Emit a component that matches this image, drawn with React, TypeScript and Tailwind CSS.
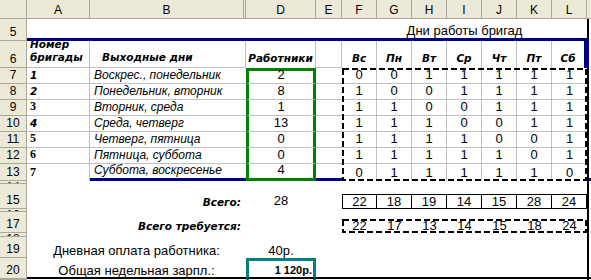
import React from "react";

const sans = "font-['Liberation_Sans',Arial,sans-serif]";
const heavy = "font-['DejaVu_Sans',sans-serif] font-bold italic text-[10.5px] leading-[13px]";
const serifNum = "font-['Liberation_Serif',serif] font-bold text-[12px] leading-none";
const hdr = "bg-[#ece9d8] border-[#aca899]";

function ColHead({ w, label }: { w: string; label: string }) {
  return (
    <div
      className={`${w} h-full shrink-0 border-r border-b ${hdr} flex items-center justify-center text-[12px] leading-none pt-px`}
    >
      {label}
    </div>
  );
}

function RowHead({ h, label, tiny }: { h: string; label: string; tiny?: boolean }) {
  return (
    <div
      className={`${h} w-[27px] shrink-0 border-r border-b ${hdr} flex justify-center overflow-hidden text-[12px] leading-none ${
        tiny ? "items-start" : "items-end pb-[2px]"
      }`}
    >
      {label}
    </div>
  );
}

function Dashed({ w, h }: { w: number; h: number }) {
  return (
    <svg className="absolute inset-0 pointer-events-none" width={w} height={h}>
      <rect
        x={1}
        y={1}
        width={w - 2}
        height={h - 2}
        fill="none"
        stroke="#000"
        strokeWidth={2}
        strokeDasharray="6 3"
      />
    </svg>
  );
}

const brigades: { n: string; serif: boolean; days: string; workers: number; week: number[] }[] = [
  { n: "1", serif: false, days: "Воскрес., понедельник", workers: 2, week: [0, 0, 1, 1, 1, 1, 1] },
  { n: "2", serif: false, days: "Понедельник, вторник", workers: 8, week: [1, 0, 0, 1, 1, 1, 1] },
  { n: "3", serif: true, days: "Вторник, среда", workers: 1, week: [1, 1, 0, 0, 1, 1, 1] },
  { n: "4", serif: false, days: "Среда, четверг", workers: 13, week: [1, 1, 1, 0, 0, 1, 1] },
  { n: "5", serif: true, days: "Четверг, пятница", workers: 0, week: [1, 1, 1, 1, 0, 0, 1] },
  { n: "6", serif: true, days: "Пятница, суббота", workers: 0, week: [1, 1, 1, 1, 1, 0, 1] },
  { n: "7", serif: true, days: "Суббота, воскресенье", workers: 4, week: [0, 1, 1, 1, 1, 1, 0] },
];

const dayNames = ["Вс", "Пн", "Вт", "Ср", "Чт", "Пт", "Сб"];
const totals = [22, 18, 19, 14, 15, 28, 24];
const required = [22, 17, 13, 14, 15, 18, 24];
const letters = ["F", "G", "H", "I", "J", "K", "L"];

export default function App() {
  return (
    <div className={`w-[591px] h-[280px] overflow-hidden bg-white text-black ${sans} flex flex-col`}>
      {/* column letters */}
      <div className="flex h-[19px] shrink-0">
        <div className={`w-[27px] h-full shrink-0 border-r border-b ${hdr}`} />
        <ColHead w="w-[63px]" label="A" />
        <ColHead w="w-[154px]" label="B" />
        <div className={`w-[2px] h-full shrink-0 border-r border-b ${hdr}`} />
        <ColHead w="w-[70px]" label="D" />
        <ColHead w="w-[26px]" label="E" />
        {letters.map((l) => (
          <ColHead key={l} w="w-[35px]" label={l} />
        ))}
        <div className={`w-[4px] h-full shrink-0 border-b ${hdr}`} />
      </div>

      {/* row 5: title */}
      <div className="flex h-[22px] shrink-0">
        <RowHead h="h-[22px]" label="5" />
        <div className="w-[315px] shrink-0 border-b-[3px] border-[#000080]" />
        <div className="w-[245px] shrink-0 border-b-[3px] border-[#000080] flex items-end justify-center text-[13px] leading-none pb-[1px]">
          Дни работы бригад
        </div>
        <div className="w-[4px] shrink-0 border-l-2 border-black" />
      </div>

      {/* row 6: headings */}
      <div className="flex h-[27px] shrink-0">
        <RowHead h="h-[27px]" label="6" />
        <div className={`w-[63px] shrink-0 border-r border-b border-[#c0c0c0] flex flex-col justify-end overflow-hidden pl-[3px] pb-[3px] ${heavy}`}>
          <span>Номер</span>
          <span>бригады</span>
        </div>
        <div className={`w-[156px] shrink-0 border-r border-b border-[#c0c0c0] flex items-end pl-[12px] pb-[3px] ${heavy}`}>
          Выходные дни
        </div>
        <div className={`w-[70px] shrink-0 border-r border-[#c0c0c0] flex items-end justify-center pb-[3px] whitespace-nowrap ${heavy}`}>
          Работники
        </div>
        <div className="w-[26px] shrink-0 border-r border-b border-[#c0c0c0]" />
        {dayNames.map((d, i) => (
          <div
            key={d}
            className={`w-[35px] shrink-0 flex items-end justify-center pb-[3px] ${heavy} ${
              i === 6 ? "border-r-[3px] border-[#000080]" : "border-r border-[#c0c0c0]"
            }`}
          >
            {d}
          </div>
        ))}
        <div className="w-[4px] shrink-0 border-l-2 border-[#000080]" />
      </div>

      {/* rows 7-13: brigades */}
      <div className="flex h-[113px] shrink-0">
        <div className="flex flex-col">
          {brigades.map((b, i) => (
            <RowHead key={b.n} h={i === 6 ? "h-[17px]" : "h-[16px]"} label={String(7 + i)} />
          ))}
        </div>
        {/* A */}
        <div className="flex flex-col w-[63px] shrink-0">
          {brigades.map((b, i) => (
            <div
              key={b.n}
              className={`${i === 6 ? "h-[17px] border-r" : "h-[16px] border-r border-b"} border-[#c0c0c0] flex items-end pl-[3px] pb-[3px]`}
            >
              <span className={b.serif ? serifNum : "font-['DejaVu_Sans',sans-serif] font-bold italic text-[10.5px] leading-none"}>
                {b.n}
              </span>
            </div>
          ))}
        </div>
        {/* B */}
        <div className="flex flex-col w-[156px] shrink-0">
          {brigades.map((b, i) => (
            <div
              key={b.n}
              className={`${
                i === 6 ? "h-[17px] border-b-[3px] border-[#000080]" : "h-[16px] border-b border-[#c0c0c0]"
              } flex items-end pl-[4px] pb-[2px] italic text-[12px] leading-none whitespace-nowrap`}
            >
              {b.days}
            </div>
          ))}
        </div>
        {/* D */}
        <div className="flex flex-col w-[70px] shrink-0">
          {brigades.map((b, i) => (
            <div
              key={b.n}
              className={`${
                i === 6
                  ? "h-[17px] border-x-[3px] border-b-[3px] border-[#008000]"
                  : i === 0
                  ? "h-[16px] border-x-[3px] border-t-[3px] border-x-[#008000] border-t-[#008000] border-b border-b-[#c0c0c0]"
                  : "h-[16px] border-x-[3px] border-x-[#008000] border-b border-b-[#c0c0c0]"
              } flex items-end justify-center pb-[2px] text-[13px] leading-none`}
            >
              {b.workers}
            </div>
          ))}
        </div>
        {/* E */}
        <div className="flex flex-col w-[26px] shrink-0">
          {brigades.map((b, i) => (
            <div
              key={b.n}
              className={i === 6 ? "h-[17px] border-b-[3px] border-[#000080]" : "h-[16px] border-b border-[#c0c0c0]"}
            />
          ))}
        </div>
        {/* F-L */}
        <div className="relative w-[245px] h-[113px] shrink-0 flex flex-col">
          {brigades.map((b, i) => (
            <div key={b.n} className={`flex ${i === 6 ? "h-[17px]" : "h-[16px] border-b border-[#c0c0c0]"}`}>
              {b.week.map((v, j) => (
                <div
                  key={j}
                  className={`w-[35px] shrink-0 flex items-end justify-center pb-[2px] text-[13px] leading-none ${
                    j < 6 ? "border-r border-[#c0c0c0]" : ""
                  }`}
                >
                  {v}
                </div>
              ))}
            </div>
          ))}
          <Dashed w={245} h={113} />
        </div>
        {/* M */}
        <div className="flex flex-col w-[4px] shrink-0">
          <div className="h-[96px] border-l-2 border-black" />
          <div className="h-[17px] border-l-2 border-l-black border-b-[3px] border-b-[#000080]" />
        </div>
      </div>

      {/* row 14 */}
      <div className="flex h-[3px] shrink-0">
        <RowHead h="h-[3px]" label="14" tiny />
        <div className="w-[560px] shrink-0" />
        <div className="w-[4px] shrink-0 border-l-2 border-black" />
      </div>

      {/* row 15: totals */}
      <div className="flex h-[25px] shrink-0">
        <RowHead h="h-[25px]" label="15" />
        <div className={`w-[219px] shrink-0 flex items-end justify-end pr-[5px] ${heavy}`}>Всего:</div>
        <div className="w-[70px] shrink-0 flex items-end justify-center pb-[2px] text-[13px] leading-none">28</div>
        <div className="w-[26px] shrink-0" />
        <div className="w-[245px] shrink-0 flex items-end">
          <div className="w-[245px] h-[15px] border border-black flex">
            {totals.map((v, j) => (
              <div
                key={j}
                className={`${j === 0 || j === 6 ? "w-[34px]" : "w-[35px]"} ${
                  j < 6 ? "border-r border-black" : ""
                } shrink-0 flex items-end justify-center text-[13px] leading-none`}
              >
                {v}
              </div>
            ))}
          </div>
        </div>
        <div className="w-[4px] shrink-0 border-l-2 border-black" />
      </div>

      {/* row 16 */}
      <div className="flex h-[3px] shrink-0">
        <RowHead h="h-[3px]" label="16" tiny />
        <div className="w-[560px] shrink-0" />
        <div className="w-[4px] shrink-0 border-l-2 border-black" />
      </div>

      {/* row 17: required */}
      <div className="flex h-[21px] shrink-0">
        <RowHead h="h-[21px]" label="17" />
        <div className={`w-[219px] shrink-0 flex items-end justify-end pr-[5px] ${heavy}`}>Всего требуется:</div>
        <div className="w-[96px] shrink-0" />
        <div className="w-[245px] shrink-0 flex items-end">
          <div className="relative w-[245px] h-[14px] flex">
            {required.map((v, j) => (
              <div key={j} className="w-[35px] shrink-0 flex items-end justify-center pb-[1px] text-[13px] leading-none">
                {v}
              </div>
            ))}
            <Dashed w={245} h={14} />
          </div>
        </div>
        <div className="w-[4px] shrink-0 border-l-2 border-black" />
      </div>

      {/* row 18 */}
      <div className="flex h-[4px] shrink-0">
        <RowHead h="h-[4px]" label="18" tiny />
        <div className="w-[560px] shrink-0" />
        <div className="w-[4px] shrink-0 border-l-2 border-black" />
      </div>

      {/* row 19: daily pay */}
      <div className="flex h-[21px] shrink-0">
        <RowHead h="h-[21px]" label="19" />
        <div className="w-[219px] shrink-0 flex items-end justify-center pb-[1px] text-[13px] leading-none">
          Дневная оплата работника:
        </div>
        <div className="w-[70px] shrink-0 flex items-end justify-center pb-[1px] text-[13px] leading-none">40р.</div>
        <div className="w-[271px] shrink-0" />
        <div className="w-[4px] shrink-0 border-l-2 border-black" />
      </div>

      {/* row 20: weekly pay */}
      <div className="flex h-[21px] shrink-0">
        <RowHead h="h-[21px]" label="20" />
        <div className="w-[219px] shrink-0 border-b-2 border-black flex items-end justify-center text-[13px] leading-none">
          Общая недельная зарпл.:
        </div>
        <div className="w-[70px] shrink-0 border-t-[3px] border-x-[3px] border-[#008080] border-b-2 border-b-black flex items-end justify-end pr-[1px] pb-[1px] text-[11px] font-bold leading-none whitespace-nowrap">
          1 120р.
        </div>
        <div className="w-[271px] shrink-0 border-b-2 border-black" />
        <div className="w-[4px] shrink-0 border-l-2 border-b-2 border-black" />
      </div>

      {/* row 21 */}
      <div className="flex h-[1px] shrink-0">
        <RowHead h="h-[1px]" label="" tiny />
        <div className="w-[219px] shrink-0" />
        <div className="w-[70px] shrink-0 border-x-[3px] border-[#008080]" />
        <div className="w-[271px] shrink-0" />
        <div className="w-[4px] shrink-0 border-l-2 border-black" />
      </div>
    </div>
  );
}
